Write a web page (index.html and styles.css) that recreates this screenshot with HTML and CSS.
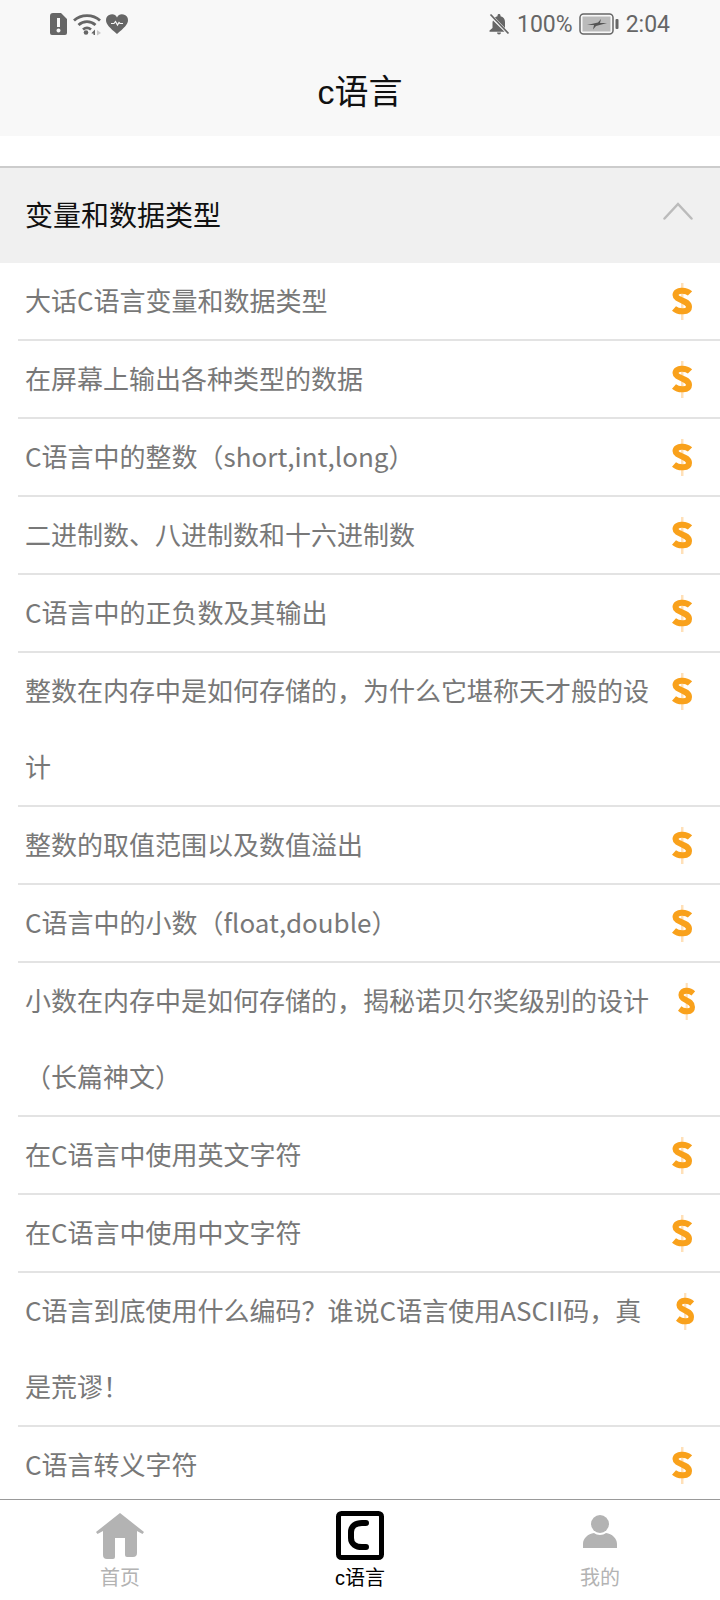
FILE: index.html
```html
<!DOCTYPE html>
<html lang="zh-CN">
<head>
<meta charset="utf-8">
<title>c语言</title>
<link rel="stylesheet" href="styles.css">
</head>
<body>
<div class="app">
  <header class="top">
    <div class="status">
      <div class="status-left">
        <svg class="ic-sim" viewBox="0 0 17 22"><path fill="#666" fill-rule="evenodd" d="M3 0h8l6 6v14a2 2 0 0 1-2 2H2a2 2 0 0 1-2-2V3a3 3 0 0 1 3-3zM7 5v9h3V5zM8.500 15.500a2 2 0 1 0 .01 0z"/></svg>
        <svg class="ic-wifi" viewBox="0 0 28 24"><g fill="none" stroke="#666" stroke-width="2.800"><path d="M1 8.500C8 2 20 2 27 8.500"/><path d="M5.500 13c5-4.500 12-4.500 17 0"/><path d="M10 17.500c2.500-2 5.500-2 8 0"/></g><circle cx="13" cy="20.500" r="2.300" fill="#666"/><path fill="#666" d="M19 20.500l3-3v5.500h-1.500v-1.500h-2z"/><path fill="#c8c8c8" d="M24 18l4 3-4 2.500z"/></svg>
        <svg class="ic-heart" viewBox="0 0 22 20"><path fill="#666" d="M11 20C4 14 0 10.500 0 6a5.800 5.800 0 0 1 11-2.500A5.800 5.800 0 0 1 22 6c0 4.500-4 8-11 14z"/><path fill="none" stroke="#f8f8f8" stroke-width="1.200" d="M5 9.500h3l1.500-2 2 3.500 1.500-2.500 1 1h3"/></svg>
      </div>
      <div class="status-right">
        <svg class="ic-bell" viewBox="0 0 22 22"><path fill="#666" d="M11 1c-1 0-1.500.7-1.500 1.500v.7C8.500 3.500 7.600 4 7 4.600L17 15V9c0-3-1.500-5-4.500-5.800v-.7C12.500 1.700 12 1 11 1zM5 7.500C4.600 8.200 4.500 9 4.500 10v5L1.500 17.500v1.200h15zM9 19.500h4a2 2 0 0 1-4 0z"/><path stroke="#666" stroke-width="1.800" d="M2.500 1.500l18 19"/></svg>
        <span class="pct">100%</span>
        <svg class="ic-batt" viewBox="0 0 40 22"><rect x="1" y="1" width="33" height="20" rx="3.500" fill="none" stroke="#666" stroke-width="1.500"/><rect x="3.500" y="3.500" width="28" height="15" fill="#bbb"/><path fill="#555" d="M8 12l11-2.500L22 6l-1 4h7l-11 3-3 3.500 1-4.500z"/><rect x="36.500" y="6" width="3" height="10" rx="1" fill="#666"/></svg>
        <span class="clock">2:04</span>
      </div>
    </div>
    <h1 class="page-title">c语言</h1>
  </header>

  <main class="content">
    <section class="group">
      <div class="group-head">
        <span>变量和数据类型</span>
        <svg class="chevron" viewBox="0 0 30 18"><path fill="none" stroke="#bbb" stroke-width="2.500" stroke-linecap="round" d="M1.500 16.500L15 2l13.500 14.500"/></svg>
      </div>
      <ul class="lessons">
        <li class="lesson"><span class="lesson-name">大话C语言变量和数据类型</span><svg class="coin" viewBox="0 0 20 37"><use href="#dollar"/></svg></li>
        <li class="lesson"><span class="lesson-name">在屏幕上输出各种类型的数据</span><svg class="coin" viewBox="0 0 20 37"><use href="#dollar"/></svg></li>
        <li class="lesson"><span class="lesson-name">C语言中的整数（short,int,long）</span><svg class="coin" viewBox="0 0 20 37"><use href="#dollar"/></svg></li>
        <li class="lesson"><span class="lesson-name">二进制数、八进制数和十六进制数</span><svg class="coin" viewBox="0 0 20 37"><use href="#dollar"/></svg></li>
        <li class="lesson"><span class="lesson-name">C语言中的正负数及其输出</span><svg class="coin" viewBox="0 0 20 37"><use href="#dollar"/></svg></li>
        <li class="lesson"><span class="lesson-name">整数在内存中是如何存储的，为什么它堪称天才般的设计</span><svg class="coin" viewBox="0 0 20 37"><use href="#dollar"/></svg></li>
        <li class="lesson"><span class="lesson-name">整数的取值范围以及数值溢出</span><svg class="coin" viewBox="0 0 20 37"><use href="#dollar"/></svg></li>
        <li class="lesson"><span class="lesson-name">C语言中的小数（float,double）</span><svg class="coin" viewBox="0 0 20 37"><use href="#dollar"/></svg></li>
        <li class="lesson squeezed"><span class="lesson-name">小数在内存中是如何存储的，揭秘诺贝尔奖级别的设计（长篇神文）</span><svg class="coin" viewBox="0 0 20 37" preserveAspectRatio="none"><use href="#dollar"/></svg></li>
        <li class="lesson"><span class="lesson-name">在C语言中使用英文字符</span><svg class="coin" viewBox="0 0 20 37"><use href="#dollar"/></svg></li>
        <li class="lesson"><span class="lesson-name">在C语言中使用中文字符</span><svg class="coin" viewBox="0 0 20 37"><use href="#dollar"/></svg></li>
        <li class="lesson tight"><span class="lesson-name">C语言到底使用什么编码？谁说C语言使用ASCII码，真是荒谬！</span><svg class="coin" viewBox="0 0 20 37" preserveAspectRatio="none"><use href="#dollar"/></svg></li>
        <li class="lesson"><span class="lesson-name">C语言转义字符</span><svg class="coin" viewBox="0 0 20 37"><use href="#dollar"/></svg></li>
      </ul>
    </section>
  </main>

  <nav class="tabs">
    <div class="tab">
      <svg class="tab-icon" viewBox="0 0 50 50"><path fill="#b3b3b3" d="M25 2L49 21l-1.500 2-5.500-3v22a4 4 0 0 1-4 4h-6a2 2 0 0 1-2-2V27H20v19a2 2 0 0 1-2 2h-6a4 4 0 0 1-4-4V20l-5.500 3L1 21z"/></svg>
      <span>首页</span>
    </div>
    <div class="tab active">
      <svg class="tab-icon" viewBox="0 0 50 50"><rect x="3.500" y="2.500" width="43" height="44" rx="3" fill="#fff" stroke="#000" stroke-width="5"/><path fill="none" stroke="#000" stroke-width="6" stroke-linecap="round" d="M31 12h-4c-6 0-11 3-11 9v6c0 6 5 9 11 9h4"/></svg>
      <span>c语言</span>
    </div>
    <div class="tab">
      <svg class="tab-icon" viewBox="0 0 50 50"><circle cx="25" cy="13" r="9" fill="#b3b3b3"/><path fill="#b3b3b3" d="M8 37v-4c0-6 5-10 11-11 3 2.500 9 2.500 12 0 6 1 11 5 11 11v4z"/></svg>
      <span>我的</span>
    </div>
  </nav>
</div>

<svg class="defs" width="0" height="0">
  <symbol id="dollar" viewBox="0 0 20 37" preserveAspectRatio="none">
    <path fill="#ffe0b8" d="M9 0h2.500v37H9z"/>
    <path fill="none" stroke="#f9a11b" stroke-width="6" stroke-linejoin="round" d="M18 10.500C14 6.500 3.500 6.500 3.500 12c0 5.500 13.500 5 13.500 12 0 5.500-10.500 5.500-15 1.500"/>
  </symbol>
</svg>
</body>
</html>
```

FILE: styles.css
```css
* { box-sizing: border-box; }

html, body {
  margin: 0;
  padding: 0;
  background: #fff;
}

body {
  font-family: "Noto Sans CJK SC", sans-serif;
}

.app {
  width: 720px;
  height: 1600px;
  display: flex;
  flex-direction: column;
  overflow: hidden;
}

/* Top area: system status row and page title */
.top {
  height: 136px;
  background: #f8f8f8;
  flex: none;
}

.status {
  height: 48px;
  display: flex;
  justify-content: space-between;
  align-items: center;
  padding: 0 50px;
  color: #666;
  font-family: Roboto, sans-serif;
  font-size: 23px;
}

.status-left, .status-right {
  display: flex;
  align-items: center;
}

.ic-sim { width: 17px; height: 22px; }
.ic-wifi { width: 28px; height: 24px; margin-left: 6px; }
.ic-heart { width: 22px; height: 20px; margin-left: 5px; }

.ic-bell { width: 22px; height: 22px; margin-right: 7px; }
.ic-batt { width: 40px; height: 22px; margin: 0 7px 0 6px; }

.page-title {
  margin: 0;
  height: 88px;
  line-height: 88px;
  text-align: center;
  font-size: 34px;
  font-weight: 400;
  color: #111;
  font-family: "Liberation Sans", "Noto Sans CJK SC", sans-serif;
}

/* Course chapter list */
.content {
  flex: 1;
  min-height: 0;
  padding-top: 30px;
  overflow: hidden;
}

.group-head {
  height: 97px;
  background: #f0f0f0;
  border-top: 2px solid #ccc;
  display: flex;
  align-items: center;
  justify-content: space-between;
  padding: 0 27px 4px 25px;
  font-size: 28px;
  color: #111;
}

.chevron {
  width: 30px;
  height: 18px;
  margin-top: -5px;
}

.lessons {
  list-style: none;
  margin: 0;
  padding: 0 0 0 18px;
}

.lesson {
  display: flex;
  align-items: flex-start;
  border-bottom: 2px solid #e3e3e3;
  padding-left: 8px;
  color: #787878;
  font-size: 26px;
  line-height: 76px;
}

.lesson-name {
  flex: 1;
  min-width: 0;
  margin: -1px 0 0 -1px;
  padding-bottom: 1px;
}

.coin {
  flex: none;
  width: 20px;
  height: 37px;
  margin: 20px 28px 0 22px;
}

.lesson.squeezed .coin {
  width: 17px;
  margin: 20px 25px 0 28px;
}

.lesson.tight .coin {
  width: 18px;
  margin: 20px 26px 0 26px;
}

/* Bottom tab bar */
.tabs {
  flex: none;
  height: 101px;
  border-top: 1px solid #999;
  background: #fff;
  display: flex;
  justify-content: space-around;
}

.tab {
  width: 240px;
  display: flex;
  flex-direction: column;
  align-items: center;
  padding-top: 11px;
  color: #b3b3b3;
  font-family: "Liberation Sans", "Noto Sans CJK SC", sans-serif;
  font-size: 20px;
  line-height: 34px;
}

.tab.active {
  color: #000;
}

.tab-icon {
  width: 50px;
  height: 50px;
  display: block;
}

.defs { position: absolute; }
```
